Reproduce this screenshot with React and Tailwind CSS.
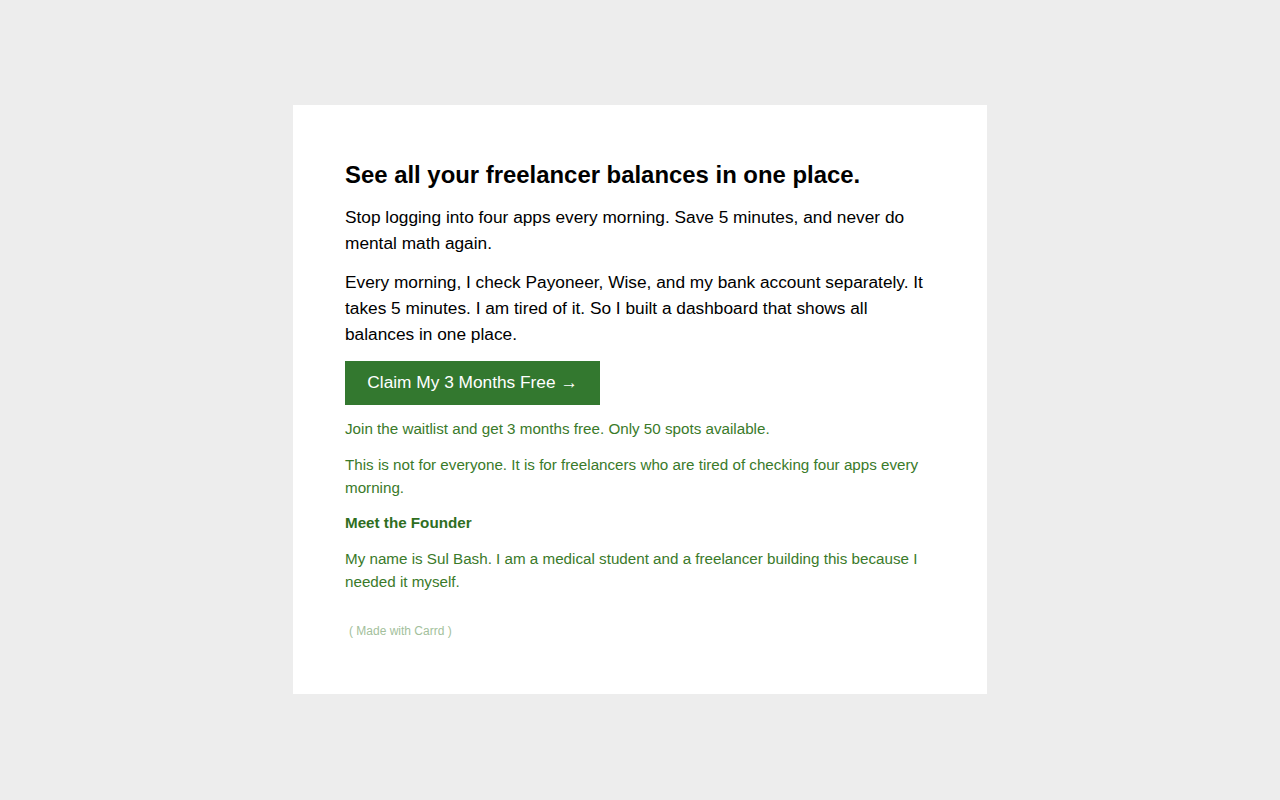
import React from 'react'

function App() {
  return (
    <div className="min-h-screen bg-[#ededed] flex justify-center pt-[105px] font-['Liberation_Sans',Arial,sans-serif]">
      <div className="w-[694px] h-[589px] bg-white px-[52px] pt-[52px]">
        <h1 className="text-[23.9px] leading-[36px] font-bold text-black">
          See all your freelancer balances in one place.
        </h1>
        <p className="mt-[11px] text-[17.3px] leading-[26px] text-black">
          Stop logging into four apps every morning. Save 5 minutes, and never do mental math again.
        </p>
        <p className="mt-[13px] text-[17.3px] leading-[26px] text-black">
          Every morning, I check Payoneer, Wise, and my bank account separately. It takes 5 minutes. I am tired of it. So I built a dashboard that shows all balances in one place.
        </p>
        <button className="mt-[14px] w-[255px] h-[44px] bg-[#33782f] text-white text-[17.3px]">
          Claim My 3 Months Free →
        </button>
        <p className="mt-[12px] text-[15.2px] leading-[23px] text-[#3a7a2a]">
          Join the waitlist and get 3 months free. Only 50 spots available.
        </p>
        <p className="mt-[13px] text-[15.2px] leading-[23px] text-[#3a7a2a]">
          This is not for everyone. It is for freelancers who are tired of checking four apps every morning.
        </p>
        <p className="mt-[12px] text-[15.2px] leading-[23px] font-bold text-[#2f6e1f]">
          Meet the Founder
        </p>
        <p className="mt-[13px] text-[15.2px] leading-[23px] text-[#3a7a2a]">
          My name is Sul Bash. I am a medical student and a freelancer building this because I needed it myself.
        </p>
        <p className="mt-[29px] text-[12px] leading-[18px] text-[#a3bf9c] pl-[4px]">
          ( Made with Carrd )
        </p>
      </div>
    </div>
  )
}

export default App
